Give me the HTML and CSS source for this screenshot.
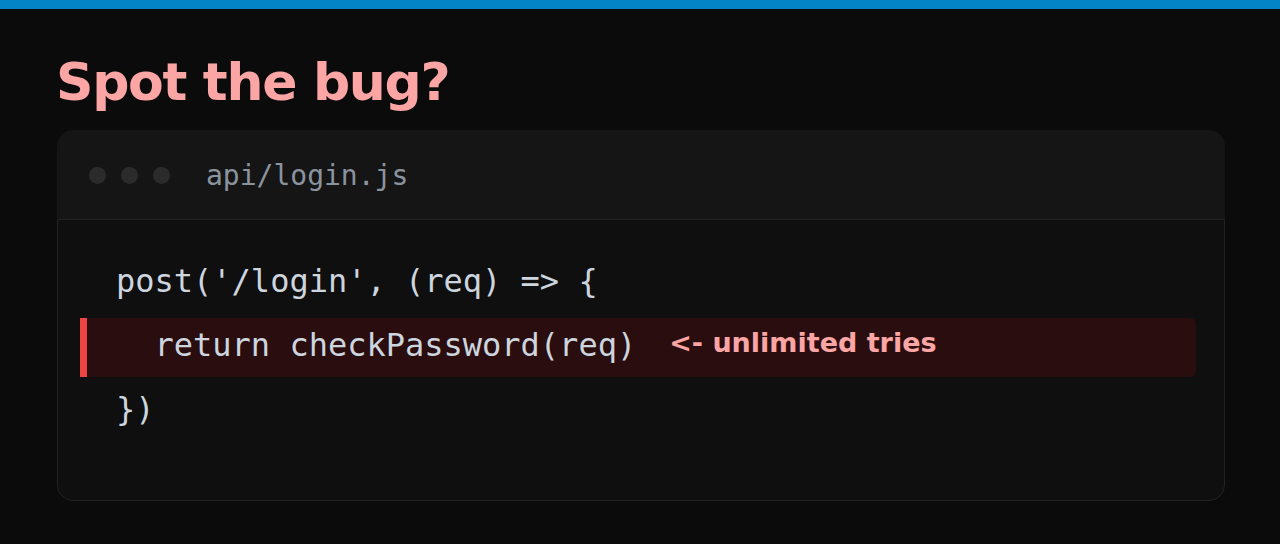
FILE: index.html
```html
<!DOCTYPE html>
<html lang="en">
<head>
<meta charset="utf-8">
<title>Spot the bug?</title>
<link rel="stylesheet" href="styles.css">
</head>
<body>
<div class="topbar"></div>
<main class="page">
  <h1 class="title">Spot the bug?</h1>
  <section class="card">
    <header class="card-head">
      <div class="dots"><span class="dot"></span><span class="dot"></span><span class="dot"></span></div>
      <span class="filename">api/login.js</span>
    </header>
    <div class="card-body">
      <div class="line"><code class="code">post('/login', (req) =&gt; {</code></div>
      <div class="line line-bug"><code class="code">  return checkPassword(req)</code><span class="note">&lt;- unlimited tries</span></div>
      <div class="line"><code class="code">})</code></div>
    </div>
  </section>
</main>
</body>
</html>
```

FILE: styles.css
```css
* { box-sizing: border-box; }
html, body { margin: 0; padding: 0; }
body {
  background: #0b0b0b;
  font-family: "DejaVu Sans", "Liberation Sans", sans-serif;
  height: 544px;
  overflow: hidden;
}
.topbar { height: 9px; background: #0284c7; }
.page { padding: 0 56px; }
.title {
  margin: 42px 0 17px;
  font-size: 52px;
  line-height: 62px;
  font-weight: 700;
  color: #fca5a5;
  letter-spacing: -1.3px;
}
.card { border-radius: 16px; margin-left: 1px; width: 1168px; }
.card-head {
  height: 89px;
  background: #151515;
  border-radius: 16px 16px 0 0;
  display: flex;
  align-items: center;
  padding: 2px 0 0 32px;
  gap: 36px;
}
.dots { display: flex; gap: 15px; }
.dot { width: 17px; height: 17px; border-radius: 50%; background: #2b2b2b; }
.filename {
  font-family: "DejaVu Sans Mono", "Liberation Mono", monospace;
  font-size: 28px;
  color: #8b949e;
}
.card-body {
  background: #0f0f0f;
  border: 1px solid #222;
  border-radius: 0 0 16px 16px;
  padding: 34px 28px 59px 22px;
  display: flex;
  flex-direction: column;
  gap: 5px;
}
.line {
  height: 59px;
  display: flex;
  align-items: flex-start;
  padding: 11px 0 0 29px;
  border-left: 7px solid transparent;
}
.line-bug {
  background: #2a0d0e;
  border-left-color: #ef4444;
  border-radius: 0 6px 6px 0;
}
.code {
  font-family: "DejaVu Sans Mono", "Liberation Mono", monospace;
  font-size: 32px;
  line-height: 32px;
  color: #cdd5df;
  white-space: pre;
}
.note {
  margin-left: 33px;
  font-size: 27px;
  line-height: 27px;
  font-weight: 700;
  color: #fca5a5;
  padding-top: 0;
}
```
